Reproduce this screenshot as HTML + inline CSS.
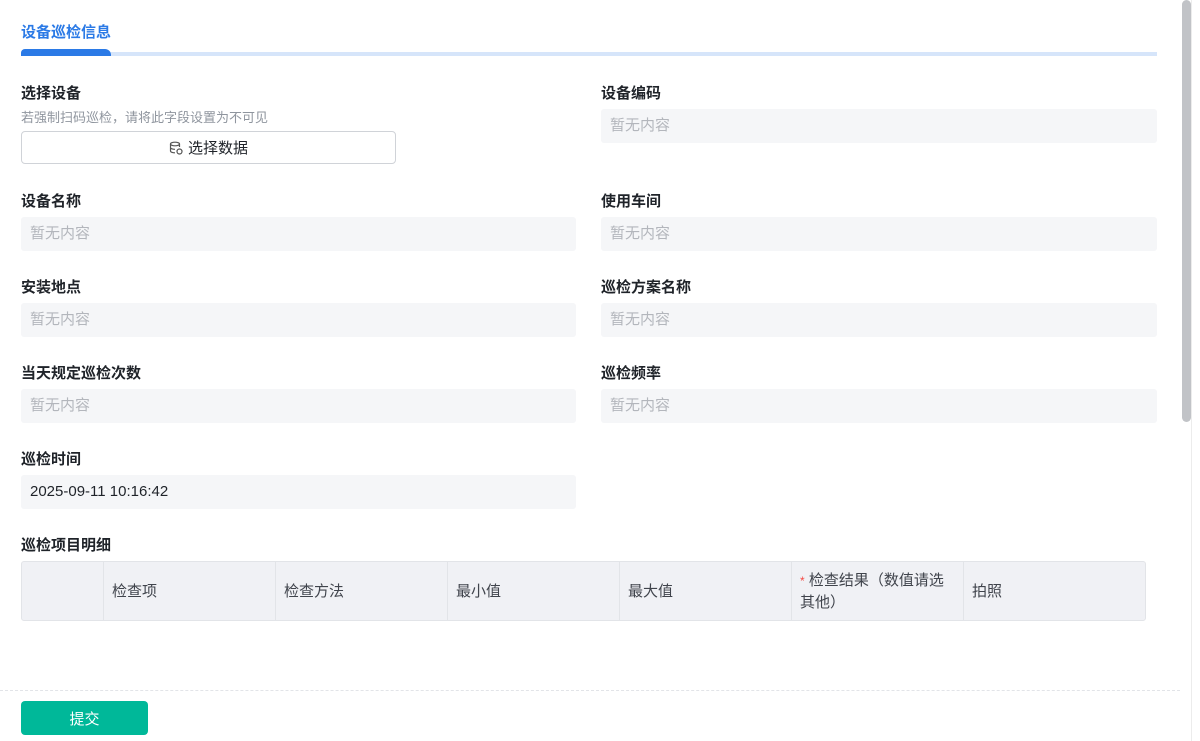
<!DOCTYPE html>
<html><head><meta charset="utf-8"><style>
*{margin:0;padding:0;box-sizing:border-box}
body{width:1200px;height:741px;overflow:hidden;background:#fff;font-family:"Liberation Sans","Noto Sans CJK SC",sans-serif;position:relative;color:#1f2329}
.a{position:absolute}
.lbl{font-size:15px;font-weight:bold;color:#1f2329;line-height:20px}
.box{background:#f5f6f8;border-radius:3px;height:34px;font-size:15px;color:#b3b6bc;line-height:34px;padding-left:9px}
.th{position:absolute;top:0;height:59px;border-left:1px solid #e2e4e8;font-size:15px;color:#40444c;display:flex;align-items:center;padding-left:8px;line-height:22px}
</style></head><body>
<div class="a" style="left:21px;top:23px;font-size:15px;font-weight:bold;color:#2b7ae6;line-height:20px">设备巡检信息</div>
<div class="a" style="left:21px;top:52px;width:1136px;height:4px;background:#d6e5fa"></div>
<div class="a" style="left:21px;top:49px;width:90px;height:7px;background:#2b7ae6;border-radius:4px 6px 0 0"></div>

<div class="a lbl" style="left:21px;top:84px">选择设备</div>
<div class="a" style="left:21px;top:109px;font-size:13px;color:#8f959e;line-height:18px">若强制扫码巡检，请将此字段设置为不可见</div>
<div class="a" style="left:21px;top:131px;width:375px;height:33px;border:1px solid #d0d3d8;border-radius:4px;font-size:15px;color:#1f2329;display:flex;align-items:center;justify-content:center">
<svg width="14" height="14" viewBox="0 0 14 14" style="margin-right:5px" fill="none" stroke="#555" stroke-width="1.2"><ellipse cx="6" cy="3" rx="4.5" ry="1.8"/><path d="M1.5 3v7c0 1 2 1.8 4.5 1.8M10.5 3v3M1.5 6.5c0 1 2 1.8 4.5 1.8"/><circle cx="10.5" cy="10.5" r="2.5"/></svg>选择数据</div>

<div class="a lbl" style="left:601px;top:84px">设备编码</div>
<div class="a box" style="left:601px;top:109px;width:556px">暂无内容</div>

<div class="a lbl" style="left:21px;top:192px">设备名称</div>
<div class="a box" style="left:21px;top:217px;width:555px">暂无内容</div>
<div class="a lbl" style="left:601px;top:192px">使用车间</div>
<div class="a box" style="left:601px;top:217px;width:556px">暂无内容</div>

<div class="a lbl" style="left:21px;top:278px">安装地点</div>
<div class="a box" style="left:21px;top:303px;width:555px">暂无内容</div>
<div class="a lbl" style="left:601px;top:278px">巡检方案名称</div>
<div class="a box" style="left:601px;top:303px;width:556px">暂无内容</div>

<div class="a lbl" style="left:21px;top:364px">当天规定巡检次数</div>
<div class="a box" style="left:21px;top:389px;width:555px">暂无内容</div>
<div class="a lbl" style="left:601px;top:364px">巡检频率</div>
<div class="a box" style="left:601px;top:389px;width:556px">暂无内容</div>

<div class="a lbl" style="left:21px;top:450px">巡检时间</div>
<div class="a box" style="left:21px;top:475px;width:555px;color:#1f2329">2025-09-11 10:16:42</div>

<div class="a lbl" style="left:21px;top:536px">巡检项目明细</div>
<div class="a" style="left:21px;top:561px;width:1125px;height:60px;background:#f0f1f5;border:1px solid #e2e4e8;border-radius:3px;overflow:hidden">
<div class="th" style="left:81px;width:172px">检查项</div>
<div class="th" style="left:253px;width:172px">检查方法</div>
<div class="th" style="left:425px;width:172px">最小值</div>
<div class="th" style="left:597px;width:172px">最大值</div>
<div class="th" style="left:769px;width:172px"><span><span style="color:#f54a45;font-size:12px">*</span> 检查结果（数值请选<br>其他）</span></div>
<div class="th" style="left:941px;width:184px">拍照</div>
</div>

<div class="a" style="left:0;top:690px;width:1180px;border-top:1px dashed #e2e4e8"></div>
<div class="a" style="left:21px;top:701px;width:127px;height:34px;background:#00b899;border-radius:4px;color:#fff;font-size:15px;display:flex;align-items:center;justify-content:center">提交</div>

<div class="a" style="left:1191px;top:0;width:1px;height:741px;background:#ececec"></div>
<div class="a" style="left:1182px;top:0;width:9px;height:422px;background:#c1c3c7;border-radius:5px"></div>
</body></html>
